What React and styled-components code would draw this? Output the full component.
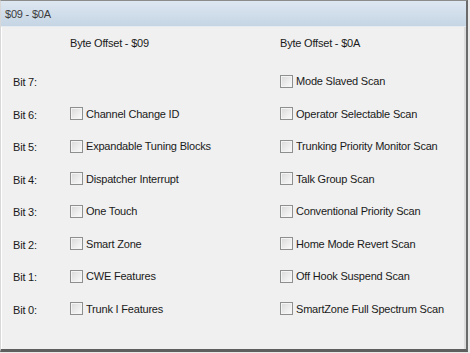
import { Fragment } from 'react';
import styled, { createGlobalStyle } from 'styled-components';

const GlobalStyle = createGlobalStyle`
  html, body {
    margin: 0;
    padding: 0;
    background: #e9e9e9;
  }
  body {
    font-family: Tahoma, "Liberation Sans", Arial, sans-serif;
    font-size: 11px;
    letter-spacing: -0.2px;
    color: #1a1a1a;
  }
`;

const Window = styled.div`
  box-sizing: border-box;
  width: 468px;
  height: 352px;
  display: flex;
  flex-direction: column;
  background: #f0f0f0;
  border-left: 1px solid #d8d8d8;
  border-top: 1px solid #8c8c8c;
  border-right: 2px solid #6a6a6a;
  border-bottom: 3px solid #5e5e5e;
  box-shadow: inset 1px 0 0 #ffffff, inset -2px 0 0 #dcdcdc;
`;

const TitleBar = styled.div`
  height: 25px;
  flex-shrink: 0;
  display: flex;
  align-items: center;
  padding-left: 4px;
  background: linear-gradient(#dde7f1, #c5d5e4);
  border-bottom: 1px solid #e4ecf2;
  color: #3c3c3c;
`;

// shared three column layout: bit label, byte $09, byte $0A
const Columns = styled.div`
  display: grid;
  grid-template-columns: 57px 210px 1fr;
  align-items: center;
  padding-left: 12px;
`;

const Header = styled(Columns)`
  height: 32px;
  margin-bottom: 6px;
`;

const Rows = styled(Columns)`
  grid-auto-rows: 32.5px;
`;

const BitLabel = styled.div`
  padding-top: 2px;
`;

const Option = styled.label`
  display: flex;
  align-items: center;
  gap: 3px;
`;

const Box = styled.span`
  box-sizing: border-box;
  width: 13px;
  height: 13px;
  flex-shrink: 0;
  border: 1px solid #8e8f8f;
  background: linear-gradient(135deg, #d9d9d9 0%, #ececec 55%, #fbfbfb 100%);
  box-shadow: inset 0 0 0 1px #f4f4f4;
`;

const left = [
  null,
  'Channel Change ID',
  'Expandable Tuning Blocks',
  'Dispatcher Interrupt',
  'One Touch',
  'Smart Zone',
  'CWE Features',
  'Trunk I Features',
];

const right = [
  'Mode Slaved Scan',
  'Operator Selectable Scan',
  'Trunking Priority Monitor Scan',
  'Talk Group Scan',
  'Conventional Priority Scan',
  'Home Mode Revert Scan',
  'Off Hook Suspend Scan',
  'SmartZone Full Spectrum Scan',
];

export default function App() {
  return (
    <>
      <GlobalStyle />
      <Window>
        <TitleBar>$09 - $0A</TitleBar>
        <Header>
          <span />
          <span>Byte Offset - $09</span>
          <span>Byte Offset - $0A</span>
        </Header>
        <Rows>
          {right.map((r, i) => (
            <Fragment key={i}>
              <BitLabel>Bit {7 - i}:</BitLabel>
              {left[i] ? (
                <Option>
                  <Box />
                  {left[i]}
                </Option>
              ) : (
                <span />
              )}
              <Option>
                <Box />
                {r}
              </Option>
            </Fragment>
          ))}
        </Rows>
      </Window>
    </>
  );
}
